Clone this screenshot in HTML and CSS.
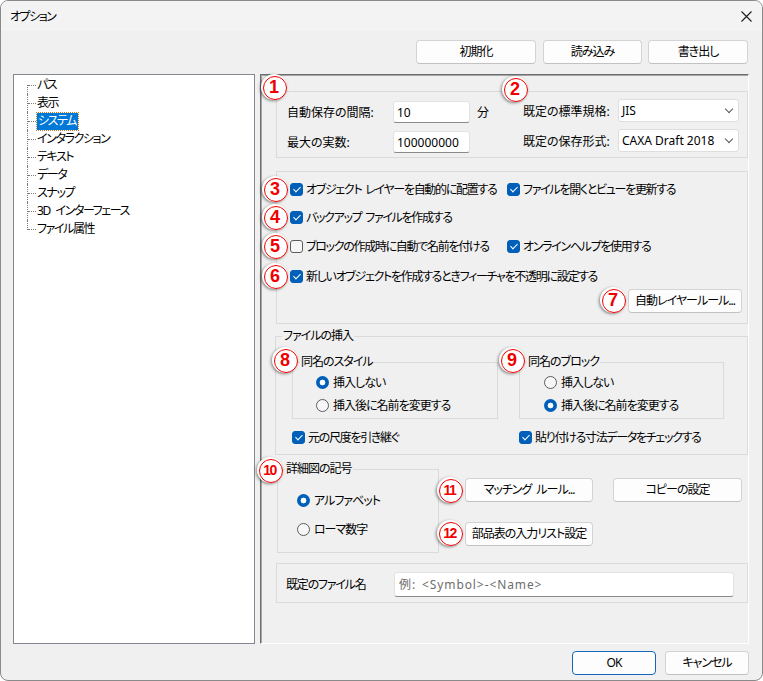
FILE: index.html
```html
<!DOCTYPE html>
<html lang="ja">
<head>
  <meta charset="UTF-8">
  <title>オプション</title>
  <link rel="stylesheet" href="styles.css">
</head>
<body>
  <div class="window">
    <div class="titlebar">
      <span class="title">オプション</span>
      <svg class="close" width="11" height="11" viewBox="0 0 11 11">
        <path d="M0.5 0.5 L10.5 10.5 M10.5 0.5 L0.5 10.5" stroke="#1b1b1b" stroke-width="1.1" fill="none"/>
      </svg>
    </div>

    <div class="toolbar">
      <button class="btn btn-init">初期化</button>
      <button class="btn btn-load">読み込み</button>
      <button class="btn btn-save">書き出し</button>
    </div>

    <div class="main">
      <ul class="tree">
        <li>パス</li>
        <li>表示</li>
        <li><span class="selected">システム</span></li>
        <li>インタラクション</li>
        <li>テキスト</li>
        <li>データ</li>
        <li>スナップ</li>
        <li>3D インターフェース</li>
        <li>ファイル属性</li>
      </ul>

      <div class="panel">
        <!-- save settings -->
        <div class="group grp-save">
          <div class="col-left">
            <div class="field">
              <span class="lbl lbl-left">自動保存の間隔:</span>
              <span class="input num">10</span>
              <span class="unit">分</span>
            </div>
            <div class="field">
              <span class="lbl lbl-left">最大の実数:</span>
              <span class="input num">100000000</span>
            </div>
          </div>
          <div class="col-right">
            <div class="field">
              <span class="lbl lbl-right">既定の標準規格:</span>
              <span class="select">JIS<i class="chev"></i></span>
            </div>
            <div class="field">
              <span class="lbl lbl-right">既定の保存形式:</span>
              <span class="select">CAXA Draft 2018<i class="chev"></i></span>
            </div>
          </div>
        </div>

        <!-- general checkboxes -->
        <div class="group grp-checks">
          <div class="check-row r1">
            <label class="check col1"><span class="cb on"></span>オブジェクト レイヤーを自動的に配置する</label>
            <label class="check"><span class="cb on"></span>ファイルを開くとビューを更新する</label>
          </div>
          <div class="check-row r2">
            <label class="check col1"><span class="cb on"></span>バックアップ ファイルを作成する</label>
          </div>
          <div class="check-row r3">
            <label class="check col1"><span class="cb"></span>ブロックの作成時に自動で名前を付ける</label>
            <label class="check"><span class="cb on"></span>オンラインヘルプを使用する</label>
          </div>
          <div class="check-row r4">
            <label class="check"><span class="cb on"></span>新しいオブジェクトを作成するときフィーチャを不透明に設定する</label>
          </div>
          <div class="btn-row">
            <button class="btn btn-rule">自動レイヤールール...</button>
          </div>
        </div>

        <!-- file insert -->
        <fieldset class="fs grp-insert">
          <legend>ファイルの挿入</legend>
          <div class="fs-body insert-body">
            <div class="sub-row">
              <fieldset class="fs sub sub-style">
                <legend>同名のスタイル</legend>
                <div class="fs-body">
                  <label class="radio"><span class="rb on"></span>挿入しない</label>
                  <label class="radio"><span class="rb"></span>挿入後に名前を変更する</label>
                </div>
              </fieldset>
              <fieldset class="fs sub sub-block">
                <legend>同名のブロック</legend>
                <div class="fs-body">
                  <label class="radio"><span class="rb"></span>挿入しない</label>
                  <label class="radio"><span class="rb on"></span>挿入後に名前を変更する</label>
                </div>
              </fieldset>
            </div>
            <div class="check-row insert-checks">
              <label class="check col-ins"><span class="cb on"></span>元の尺度を引き継ぐ</label>
              <label class="check"><span class="cb on"></span>貼り付ける寸法データをチェックする</label>
            </div>
          </div>
        </fieldset>

        <!-- detail symbol -->
        <div class="detail-row">
          <fieldset class="fs grp-detail">
            <legend>詳細図の記号</legend>
            <div class="fs-body">
              <label class="radio"><span class="rb on"></span>アルファベット</label>
              <label class="radio"><span class="rb"></span>ローマ数字</label>
            </div>
          </fieldset>
          <div class="detail-btns">
            <button class="btn">マッチング ルール...</button>
            <button class="btn btn-copy">コピーの設定</button>
            <button class="btn">部品表の入力リスト設定</button>
          </div>
        </div>

        <div class="group grp-name">
          <span class="lbl lbl-name">既定のファイル名</span>
          <span class="input name-input">例: &lt;Symbol&gt;-&lt;Name&gt;</span>
        </div>
      </div>
    </div>

    <div class="footer">
      <button class="btn btn-ok">OK</button>
      <button class="btn btn-cancel">キャンセル</button>
    </div>

    <span class="badge b1">1</span>
    <span class="badge b2">2</span>
    <span class="badge b3">3</span>
    <span class="badge b4">4</span>
    <span class="badge b5">5</span>
    <span class="badge b6">6</span>
    <span class="badge b7">7</span>
    <span class="badge b8">8</span>
    <span class="badge b9">9</span>
    <span class="badge b10 two">10</span>
    <span class="badge b11 two">11</span>
    <span class="badge b12 two">12</span>
  </div>
</body>
</html>
```

FILE: styles.css
```css
* {
  box-sizing: border-box;
}
html, body {
  margin: 0;
  background: #ffffff;
}
body {
  font-family: "Noto Sans", "Noto Sans CJK JP", sans-serif;
  font-size: 12px;
  color: #000;
  font-feature-settings: "palt" 1;
}
.window {
  position: relative;
  width: 763px;
  height: 681px;
  border: 1px solid #8a8a8a;
  border-radius: 8px;
  background: #f0f0f0;
  overflow: hidden;
  display: flex;
  flex-direction: column;
}
.titlebar {
  height: 30px;
  flex: none;
  background: #f3f3f3;
  display: flex;
  align-items: center;
  justify-content: space-between;
  padding: 0 10px 0 9px;
}
.title {
  letter-spacing: -1.5px;
}

/* buttons */
.btn {
  font: inherit;
  height: 24px;
  padding: 0;
  background: #fdfdfd;
  border: 1px solid #d3d3d3;
  border-bottom-color: #c2c2c2;
  border-radius: 4px;
  color: #000;
  line-height: 20px;
  white-space: nowrap;
  letter-spacing: -1px;
  word-spacing: 3px;
}
.toolbar {
  display: flex;
  justify-content: flex-end;
  gap: 7px;
  margin-top: 9px;
  padding-right: 14px;
}
.btn-init { width: 120px; }
.btn-load { width: 99px; }
.btn-save { width: 100px; margin-left: -1px; }

.main {
  display: flex;
  margin-top: 10px;
  padding-left: 12px;
  height: 570px;
  flex: none;
}

/* tree */
.tree {
  width: 242px;
  margin: 0;
  padding: 1px 0 0 0;
  list-style: none;
  background: #fff;
  border: 1px solid #828790;
}
.tree li {
  position: relative;
  height: 18px;
  line-height: 18px;
  padding-left: 23px;
  letter-spacing: -1.4px;
  word-spacing: 4px;
}
.tree li::before {
  content: "";
  position: absolute;
  left: 13px;
  top: 0;
  height: 18px;
  border-left: 1px dotted #7a7a7a;
}
.tree li:first-child::before {
  top: 9px;
  height: 9px;
}
.tree li:last-child::before {
  height: 10px;
}
.tree li::after {
  content: "";
  position: absolute;
  left: 14px;
  top: 9px;
  width: 8px;
  border-top: 1px dotted #7a7a7a;
}
.tree .selected {
  display: inline-block;
  height: 17px;
  line-height: 16px;
  padding: 0 2px 0 1px;
  background: #0078d7;
  color: #fff;
  outline: 1px dotted #c08030;
}

/* right panel */
.panel {
  width: 489px;
  margin-left: 5px;
  border: 1px solid #ffffff;
  border-top-color: #6e6e6e;
  border-left-color: #6e6e6e;
  box-shadow: inset 1px 1px 0 #a6a6a6;
  padding: 16px 0 0 15px;
  display: flex;
  flex-direction: column;
}
.group {
  width: 472px;
  border: 1px solid #dadada;
}
.lbl {
  white-space: nowrap;
}
.field {
  display: flex;
  align-items: center;
}
.input {
  display: inline-flex;
  align-items: center;
  background: #fff;
  border: 1px solid #e3e3e3;
  border-bottom-color: #8a8a8a;
  border-radius: 3px;
  padding-left: 3px;
}

.grp-save {
  height: 67px;
  display: flex;
  padding: 9px 0 0 10px;
}
.col-left {
  width: 236px;
  display: flex;
  flex-direction: column;
  gap: 8px;
}
.lbl-left { width: 106px; }
.num {
  width: 77px;
  height: 22px;
}
.unit { margin-left: 7px; }
.col-right {
  margin-top: -2px;
  display: flex;
  flex-direction: column;
  gap: 7px;
}
.lbl-right { width: 95px; }
.select {
  position: relative;
  width: 121px;
  height: 23px;
  display: inline-flex;
  align-items: center;
  padding-left: 3px;
  background: #fff;
  border: 1px solid #dedede;
  border-radius: 3px;
  white-space: nowrap;
}
.chev {
  position: absolute;
  right: 6px;
  top: 6px;
  width: 6px;
  height: 6px;
  border-right: 1px solid #555;
  border-bottom: 1px solid #555;
  transform: rotate(45deg);
}

/* checkboxes and radios */
.check, .radio {
  display: flex;
  align-items: center;
  height: 18px;
  white-space: nowrap;
}
.check {
  letter-spacing: -1.3px;
  word-spacing: 2px;
}
.radio { letter-spacing: -1px; }
.cb {
  position: relative;
  width: 13px;
  height: 13px;
  margin-right: 3px;
  border: 1px solid #5c5c5c;
  border-radius: 3px;
  background: #f7f7f7;
  flex: none;
}
.cb.on {
  background: #005fb8;
  border-color: #005fb8;
}
.cb.on::after {
  content: "";
  position: absolute;
  left: 3.5px;
  top: 1.5px;
  width: 3px;
  height: 6px;
  border: solid #fff;
  border-width: 0 1.3px 1.3px 0;
  transform: rotate(45deg);
}
.rb {
  width: 13px;
  height: 13px;
  margin-right: 4px;
  border-radius: 50%;
  border: 1px solid #5c5c5c;
  background: #f7f7f7;
  flex: none;
}
.rb.on {
  border: none;
  background: radial-gradient(circle, #fff 0 2.6px, #005fb8 3.2px);
}

.grp-checks {
  height: 153px;
  margin-top: 13px;
  padding: 8px 0 0 13px;
}
.check-row {
  display: flex;
}
.r2 { margin-top: 10px; }
.r3 { margin-top: 11px; }
.r4 { margin-top: 12px; }
.col1 { width: 217px; }
.btn-row {
  display: flex;
  justify-content: flex-end;
  margin-top: 4px;
  padding-right: 5px;
}
.btn-rule { width: 114px; }

/* fieldsets */
.fs {
  margin: 0;
  padding: 0;
  border: 1px solid #dadada;
  min-width: 0;
}
.fs legend {
  line-height: 14px;
  padding: 0 1px;
  margin-left: 7px;
  letter-spacing: -1px;
}
.grp-insert {
  width: 473px;
  height: 126px;
  margin: 5px 0 0 -1px;
}
.grp-insert > legend { margin-left: 6px; }
.insert-body { padding-left: 16px; }
.sub-row {
  display: flex;
  margin-top: 12px;
}
.sub {
  height: 64px;
}
.sub .fs-body { padding-top: 4px; }
.sub .radio + .radio { margin-top: 5px; }
.sub-style {
  width: 206px;
}
.sub-style .fs-body { padding-left: 23px; }
.sub-block {
  width: 205px;
  margin-left: 21px;
}
.sub-block .fs-body { padding-left: 24px; }
.insert-checks { margin-top: 9px; }
.col-ins { width: 227px; }

.detail-row {
  display: flex;
  margin-top: 7px;
}
.grp-detail {
  width: 162px;
  height: 91px;
  margin-left: 1px;
}
.grp-detail .fs-body { padding: 15px 0 0 19px; }
.grp-detail .radio + .radio { margin-top: 11px; }
.detail-btns {
  display: grid;
  grid-template-columns: 128px 129px;
  column-gap: 20px;
  row-gap: 20px;
  margin: 16px 0 0 26px;
  align-self: flex-start;
}

.grp-name {
  height: 40px;
  margin-top: 10px;
  display: flex;
  align-items: center;
  padding: 2px 0 0 9px;
}
.lbl-name {
  width: 108px;
  letter-spacing: -1.2px;
}
.name-input {
  width: 340px;
  height: 25px;
  padding-left: 4px;
  color: #6d6d6d;
  letter-spacing: 0.9px;
  word-spacing: 2px;
}

/* footer */
.footer {
  display: flex;
  justify-content: flex-end;
  gap: 9px;
  margin-top: 7px;
  padding-right: 13px;
}
.btn-ok {
  width: 84px;
  border-color: #1467b8;
}
.btn-cancel { width: 84px; }

/* numbered callouts */
.badge {
  position: absolute;
  width: 26px;
  height: 26px;
  border-radius: 50%;
  background: #fff;
  box-shadow: -1px 1px 3px rgba(0, 0, 0, 0.45);
  display: flex;
  align-items: center;
  justify-content: center;
  color: #f00000;
  font-family: "Liberation Sans", sans-serif;
  font-weight: bold;
  font-size: 18px;
  line-height: 1;
}
.badge::before {
  content: "";
  position: absolute;
  left: 2px;
  top: 2px;
  width: 22px;
  height: 22px;
  border: 1.6px solid #f00000;
  border-radius: 50%;
}
.badge.two {
  font-size: 14px;
  letter-spacing: -1.5px;
  padding-right: 1px;
}
.b1 { left: 260px; top: 73px; }
.b2 { left: 501px; top: 75px; }
.b3 { left: 261px; top: 175px; }
.b4 { left: 261px; top: 203px; }
.b5 { left: 261px; top: 232px; }
.b6 { left: 261px; top: 262px; }
.b7 { left: 599px; top: 286px; }
.b8 { left: 271px; top: 346px; }
.b9 { left: 498px; top: 346px; }
.b10 { left: 256px; top: 456px; }
.b11 { left: 436px; top: 476px; }
.b12 { left: 436px; top: 519px; }
```
